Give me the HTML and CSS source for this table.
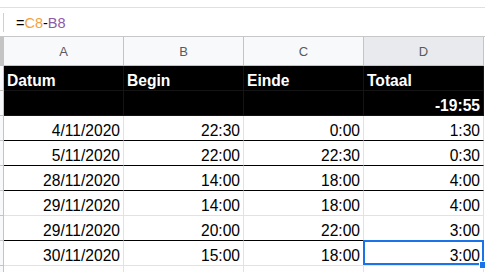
FILE: index.html
```html
<!DOCTYPE html>
<html>
<head>
<meta charset="utf-8">
<link rel="stylesheet" href="styles.css">
</head>
<body>
<div class="topbar"></div>
<div class="formula">
  <div class="fx-sep"></div>
  <div class="fx-text">=<span class="ref-c">C8</span>-<span class="ref-b">B8</span></div>
</div>
<div class="sheet">
  <div class="corner"></div>
  <div class="ch">A</div>
  <div class="ch">B</div>
  <div class="ch">C</div>
  <div class="ch ch-sel">D</div>

  <div class="rh"></div>
  <div class="hd">Datum</div>
  <div class="hd">Begin</div>
  <div class="hd">Einde</div>
  <div class="hd">Totaal</div>

  <div class="rh"></div>
  <div class="hd"></div>
  <div class="hd"></div>
  <div class="hd"></div>
  <div class="hd hd-num">-19:55</div>

  <div class="rh"></div>
  <div class="c bk">4/11/2020</div>
  <div class="c bk">22:30</div>
  <div class="c bk">0:00</div>
  <div class="c bk">1:30</div>

  <div class="rh"></div>
  <div class="c bk">5/11/2020</div>
  <div class="c bk">22:00</div>
  <div class="c bk">22:30</div>
  <div class="c bk">0:30</div>

  <div class="rh"></div>
  <div class="c bk">28/11/2020</div>
  <div class="c bk">14:00</div>
  <div class="c bk">18:00</div>
  <div class="c bk">4:00</div>

  <div class="rh"></div>
  <div class="c">29/11/2020</div>
  <div class="c">14:00</div>
  <div class="c">18:00</div>
  <div class="c">4:00</div>

  <div class="rh"></div>
  <div class="c bk">29/11/2020</div>
  <div class="c bk">20:00</div>
  <div class="c bk">22:00</div>
  <div class="c bk">3:00</div>

  <div class="rh"></div>
  <div class="c">30/11/2020</div>
  <div class="c">15:00</div>
  <div class="c">18:00</div>
  <div class="c active">3:00<span class="sel-box"></span><span class="sel-handle"></span></div>

  <div class="rh"></div>
  <div class="c"></div>
  <div class="c"></div>
  <div class="c"></div>
  <div class="c"></div>
</div>
</body>
</html>
```
FILE: styles.css
```css
html, body {
  margin: 0;
  padding: 0;
  background: #ffffff;
  overflow: hidden;
}
body {
  width: 485px;
  height: 272px;
  font-family: "Liberation Sans", Arial, sans-serif;
}
.topbar {
  height: 7px;
  border-bottom: 1px solid #e0e0e0;
}
.formula {
  height: 28px;
  border-bottom: 1px solid #c7c7c7;
  display: flex;
  align-items: center;
}
.fx-sep {
  width: 1px;
  height: 19px;
  margin-left: 3px;
  background: #d0d0d0;
}
.fx-text {
  margin-left: 12px;
  font-size: 14.5px;
  color: #000;
  line-height: 18px;
  padding-top: 1px;
}
.ref-c { color: #f6a03c; }
.ref-b { color: #8f5aa6; }

.sheet {
  display: grid;
  grid-template-columns: 4px repeat(4, 120px);
  grid-template-rows: 29px;
  grid-auto-rows: 25px;
  height: 235px;
  overflow: hidden;
}
.sheet > div {
  box-sizing: border-box;
  border-right: 1px solid #e2e2e2;
  border-bottom: 1px solid #e2e2e2;
  white-space: nowrap;
}
.sheet > .corner {
  background: #c4c4c4;
  border-right: 1px solid #c4c4c4;
  border-bottom: 1px solid #c4c4c4;
}
.sheet > .ch {
  background: #f8f9fa;
  border-right: 1px solid #c4c4c4;
  border-bottom: 1px solid #c4c4c4;
  color: #575a5e;
  font-size: 13px;
  display: flex;
  align-items: center;
  justify-content: center;
  padding-top: 1px;
}
.sheet > .ch-sel {
  background: #e8eaed;
}
.sheet > .rh {
  background: #f8f9fa;
  border-right: 1px solid #c4c4c4;
  border-bottom: 1px solid #c4c4c4;
}
.sheet > .hd {
  background: #000;
  color: #fff;
  font-weight: bold;
  font-size: 15.6px;
  border-right: 1px solid #141414;
  border-bottom: 1px solid #141414;
  display: flex;
  align-items: flex-end;
  padding: 0 3px 0 3px;
}
.sheet > .hd-num {
  justify-content: flex-end;
}
.sheet > .c {
  color: #000;
  font-size: 15.6px;
  display: flex;
  align-items: flex-end;
  justify-content: flex-end;
  padding: 0 3px 0 3px;
}
.sheet > .bk {
  border-bottom: 1px solid #000;
}
.sheet > .active {
  position: relative;
}
.sel-box {
  position: absolute;
  left: -1px;
  top: -1px;
  right: -1px;
  bottom: 0;
  border: 2px solid #1a73e8;
}
.sel-handle {
  position: absolute;
  right: -4px;
  bottom: -4px;
  width: 6px;
  height: 6px;
  background: #1a73e8;
  border: 1px solid #fff;
}
```
